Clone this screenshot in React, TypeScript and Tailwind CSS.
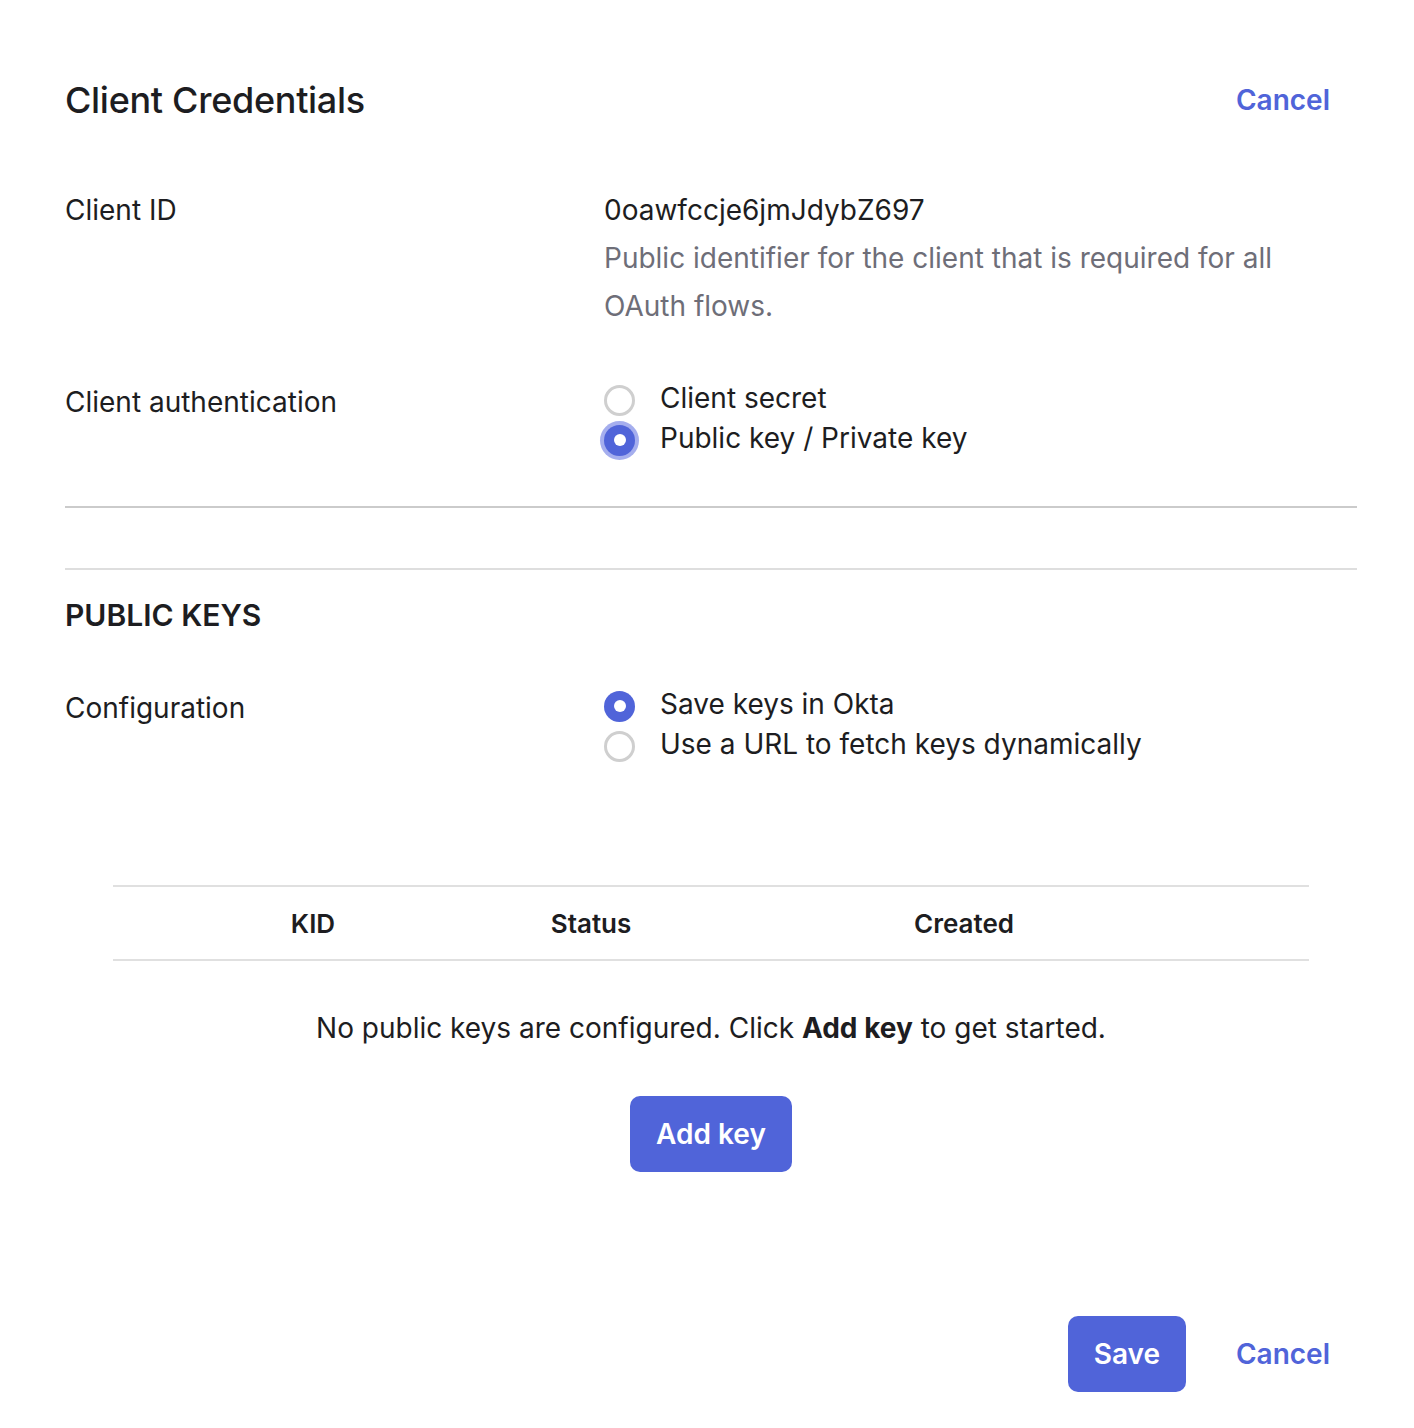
import React from 'react';

const Radio = ({ checked, focused }: { checked?: boolean; focused?: boolean }) => {
    if (checked) {
        return (
            <span className={`flex h-[31px] w-[31px] shrink-0 items-center justify-center rounded-full bg-[#5064d9] ${focused ? 'ring-4 ring-[#a5aeee]' : ''}`}>
                <span className="h-[12px] w-[12px] rounded-full bg-white" />
            </span>
        );
    }
    return <span className="h-[31px] w-[31px] shrink-0 rounded-full border-[3px] border-[#cfcfcf] bg-white" />;
};

const Option = ({ label, checked, focused }: { label: string; checked?: boolean; focused?: boolean }) => (
    <label className="flex h-[40px] items-center">
        <span className="flex w-[56px] items-center pt-[4px]">
            <Radio checked={checked} focused={focused} />
        </span>
        <span>{label}</span>
    </label>
);

const App = () => {
    return (
        <div className="h-[1428px] overflow-hidden bg-white pl-[65px] pr-[57px] pt-[80px] text-[28px] text-[#1d1d21] font-['Inter',sans-serif]">
            <div className="flex h-[40px] items-center justify-between">
                <h1 className="text-[36px] font-medium tracking-[-0.3px]">Client Credentials</h1>
                <button className="pr-[27px] text-[28px] font-semibold text-[#5064d9]">Cancel</button>
            </div>

            <div className="mt-[66px] grid grid-cols-[539px_1fr] leading-[48px]">
                <div>Client ID</div>
                <div>
                    <div>0oawfccje6jmJdybZ697</div>
                    <p className="max-w-[700px] text-[#6e6e78]">Public identifier for the client that is required for all OAuth flows.</p>
                </div>
            </div>

            <div className="mt-[48px] grid grid-cols-[539px_1fr]">
                <div className="leading-[48px]">Client authentication</div>
                <div>
                    <Option label="Client secret" />
                    <Option label="Public key / Private key" checked focused />
                </div>
            </div>

            <div className="mt-[48px] h-[2px] bg-[#cbcbcb]" />
            <div className="mt-[60px] h-[2px] bg-[#dedede]" />

            <h2 className="mt-[25px] h-[40px] text-[30px] font-semibold leading-[40px]">PUBLIC KEYS</h2>

            <div className="mt-[49px] grid grid-cols-[539px_1fr]">
                <div className="leading-[48px]">Configuration</div>
                <div>
                    <Option label="Save keys in Okta" checked />
                    <Option label="Use a URL to fetch keys dynamically" />
                </div>
            </div>

            <div className="mx-[48px] mt-[121px]">
                <div className="grid h-[76px] grid-cols-[400px_156px_590px_1fr] items-center border-y-2 border-[#e0e0e0] text-[26px] font-semibold">
                    <div className="text-center">KID</div>
                    <div className="text-center">Status</div>
                    <div className="text-center">Created</div>
                    <div />
                </div>
                <p className="mt-[43px] text-center leading-[48px]">
                    No public keys are configured. Click <span className="font-bold">Add key</span> to get started.
                </p>
                <div className="mt-[44px] flex justify-center">
                    <button className="h-[76px] w-[162px] rounded-[10px] bg-[#5064d9] text-[28px] font-semibold text-white">Add key</button>
                </div>
            </div>

            <div className="mt-[144px] flex items-center justify-end">
                <button className="h-[76px] w-[118px] rounded-[10px] bg-[#5064d9] text-[28px] font-semibold text-white">Save</button>
                <button className="ml-[50px] pr-[27px] text-[28px] font-semibold text-[#5064d9]">Cancel</button>
            </div>
        </div>
    );
};

export default App;
